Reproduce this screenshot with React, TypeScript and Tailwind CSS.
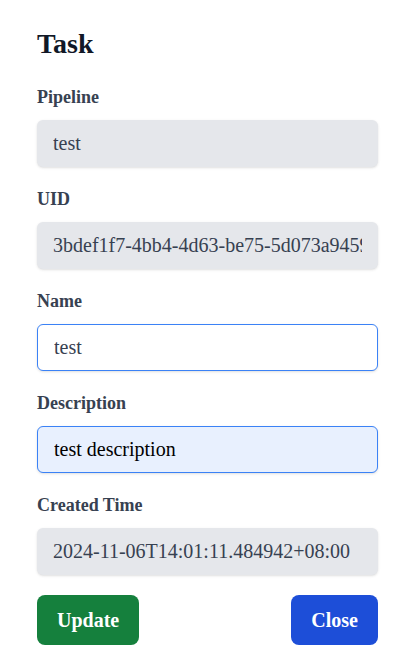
import { useState } from 'react';

const baseInput =
  "block h-[47px] w-full rounded-md px-4 font-['Liberation_Serif',serif] text-[20px] shadow-sm outline-none";
const readonlyInput = `${baseInput} bg-[#e5e7eb] text-[#374151]`;
const editInput = `${baseInput} border border-[#3b82f6]`;

function Field({ label, children }: { label: string; children: React.ReactNode }) {
  return (
    <div className="mb-[18px]">
      <label className="mb-[8px] block text-[18px] leading-[29px] font-bold text-[#374151]">{label}</label>
      {children}
    </div>
  );
}

export default function App() {
  const [name, setName] = useState('test');
  const [description, setDescription] = useState('test description');

  return (
    <div className="min-h-[665px] bg-white font-['Liberation_Serif',serif]">
      <div className="ml-[37px] w-[341px] pt-[25px]">
        <h1 className="mb-[20px] text-[28px] leading-[38px] font-bold text-[#111827]">Task</h1>

        <Field label="Pipeline">
          <input readOnly value="test" className={readonlyInput} />
        </Field>
        <Field label="UID">
          <input readOnly value="3bdef1f7-4bb4-4d63-be75-5d073a945901" className={readonlyInput} />
        </Field>
        <Field label="Name">
          <input value={name} onChange={(e) => setName(e.target.value)} className={`${editInput} bg-white text-[#374151]`} />
        </Field>
        <Field label="Description">
          <input
            value={description}
            onChange={(e) => setDescription(e.target.value)}
            className={`${editInput} bg-[#e8f0fe] text-black`}
          />
        </Field>
        <Field label="Created Time">
          <input readOnly value="2024-11-06T14:01:11.484942+08:00" className={readonlyInput} />
        </Field>

        <div className="mt-5 flex justify-between">
          <button className="h-[50px] rounded-lg bg-[#15803d] px-5 font-['Liberation_Serif',serif] text-[20px] font-bold text-white">
            Update
          </button>
          <button className="h-[50px] rounded-lg bg-[#1d4ed8] px-5 font-['Liberation_Serif',serif] text-[20px] font-bold text-white">
            Close
          </button>
        </div>
      </div>
    </div>
  );
}
